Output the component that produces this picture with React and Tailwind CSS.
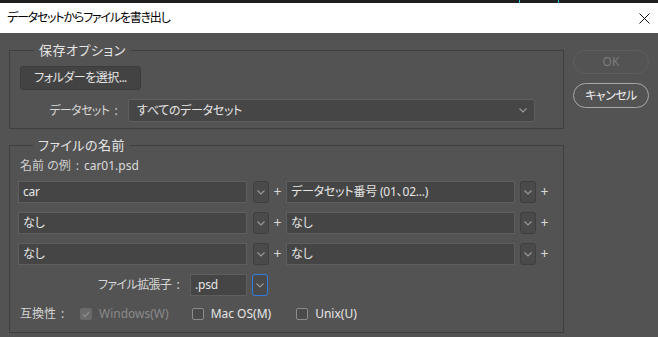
import React from 'react';

const font = "font-['Noto_Sans','Noto_Sans_CJK_JP',sans-serif] [font-feature-settings:'palt']";

// Small chevron used in dropdowns
const Chevron = ({ className = 'text-[#9a9a9a]' }) => (
  <svg width="8" height="5" viewBox="0 0 8 5" className={className}>
    <path d="M0.5 0.5 L4 4 L7.5 0.5" fill="none" stroke="currentColor" strokeWidth="1.1" />
  </svg>
);

const Colon = () => <span className="px-[5px]">:</span>;

const TextBox = ({ value, width = 'w-[229px]' }) => (
  <div className={`${width} h-[22px] bg-[#454545] border border-[#5e5e5e] flex items-center pl-[4px] text-[12px] tracking-[-0.2px] text-[#e6e6e6]`}>
    {value}
  </div>
);

const DropButton = ({ focused }) => (
  <div
    className={`w-[16px] h-[22px] rounded-[3px] bg-[#4a4a4a] border flex items-center justify-center ${
      focused ? 'border-[#2f7fe0]' : 'border-[#3f3f3f]'
    }`}
  >
    <Chevron />
  </div>
);

const Plus = () => (
  <div className="w-[17px] flex items-center justify-center text-[#d8d8d8] text-[14px] leading-none">+</div>
);

const NameRow = ({ left, right }) => (
  <div className="flex items-center">
    <TextBox value={left} />
    <div className="ml-[6px]">
      <DropButton />
    </div>
    <Plus />
    <TextBox value={right} />
    <div className="ml-[5px]">
      <DropButton />
    </div>
    <Plus />
  </div>
);

const CheckBox = ({ label, checked, disabled }) => (
  <div className="flex items-center">
    <div
      className={`w-[12px] h-[12px] rounded-[2px] border flex items-center justify-center ${
        disabled ? 'bg-[#6a6a6a] border-[#6a6a6a]' : 'bg-[#4a4a4a] border-[#8c8c8c]'
      }`}
    >
      {checked && (
        <svg width="8" height="7" viewBox="0 0 8 7">
          <path d="M1 3.5 L3 5.5 L7 1" fill="none" stroke="#8a8a8a" strokeWidth="1.4" />
        </svg>
      )}
    </div>
    <span className={`ml-[7px] text-[12px] ${disabled ? 'text-[#8a8a8a]' : 'text-[#e6e6e6]'}`}>{label}</span>
  </div>
);

export default function App() {
  return (
    <div className={`w-[658px] h-[337px] bg-[#535353] overflow-hidden flex flex-col ${font}`}>
      {/* window strip behind the dialog */}
      <div className="h-[3px] bg-[#1f1f1f] flex">
        <div className="ml-[519px] w-px bg-[#2fc9d8]" />
        <div className="ml-[38px] w-px bg-[#2fc9d8]" />
      </div>

      {/* title bar */}
      <div className="h-[30px] bg-white flex items-center justify-between pl-[7px] pr-[8px]">
        <span className="text-[12px] tracking-[-1.2px] text-black">データセットからファイルを書き出し</span>
        <svg width="11" height="11" viewBox="0 0 11 11">
          <path d="M0.5 0.5 L10.5 10.5 M10.5 0.5 L0.5 10.5" stroke="#111" strokeWidth="1" />
        </svg>
      </div>

      <div className="flex pl-[9px] pt-[9px]">
        {/* left column */}
        <div className="w-[555px] flex flex-col">
          <fieldset className="border border-[#3f3f3f] pl-[9px] pb-[6px]">
            <legend className="ml-[15px] px-[5px] text-[13px] leading-[16px] tracking-[0.5px] text-[#e4e4e4]">保存オプション</legend>
            <div className="mt-[8px] ml-px w-[121px] h-[24px] rounded-[3px] bg-[#434343] border border-[#3c3c3c] flex items-center justify-center text-[12px] tracking-[-0.5px] text-[#e6e6e6]">
              フォルダーを選択...
            </div>
            <div className="flex items-center mt-[9px]">
              <div className="w-[103px] text-right text-[12px] tracking-[-0.6px] text-[#d6d6d6]">
                データセット<Colon />
              </div>
              <div className="ml-[6px] w-[407px] h-[23px] rounded-[2px] bg-[#464646] border border-[#5e5e5e] flex items-center justify-between pl-[8px] pr-[7px] text-[12px] tracking-[-0.3px] text-[#e6e6e6]">
                すべてのデータセット
                <Chevron />
              </div>
            </div>
          </fieldset>

          <fieldset className="mt-[8px] border border-[#3f3f3f] pl-[8px] pb-[8px]">
            <legend className="ml-[15px] px-[5px] text-[13px] leading-[16px] tracking-[0.5px] text-[#e4e4e4]">ファイルの名前</legend>
            <div className="mt-[5px] ml-[2px] text-[12px] leading-[16px] text-[#cfcfcf]">
              <span>名前 の例</span>
              <Colon />
              <span className="text-[#dcdcdc]">car01.psd</span>
            </div>
            <div className="mt-[7px] flex flex-col gap-[9px]">
              <NameRow left="car" right="データセット番号 (01、02...)" />
              <NameRow left="なし" right="なし" />
              <NameRow left="なし" right="なし" />
              <div className="flex items-center">
                <div className="w-[166px] text-right text-[12px] tracking-[-0.6px] text-[#d6d6d6]">
                  ファイル拡張子<Colon />
                </div>
                <div className="ml-[6px]">
                  <TextBox value=".psd" width="w-[57px]" />
                </div>
                <div className="ml-[5px]">
                  <DropButton focused />
                </div>
              </div>
            </div>
            <div className="mt-[8px] flex items-center h-[20px] pl-[2px]">
              <span className="w-[60px] text-[12px] text-[#d6d6d6]">
                互換性<Colon />
              </span>
              <CheckBox label="Windows(W)" checked disabled />
              <div className="ml-[23px]">
                <CheckBox label="Mac OS(M)" />
              </div>
              <div className="ml-[25px]">
                <CheckBox label="Unix(U)" />
              </div>
            </div>
          </fieldset>
        </div>

        {/* right column */}
        <div className="ml-[9px] pt-[8px] flex flex-col gap-[9px]">
          <div className="w-[76px] h-[24px] rounded-full border border-[#5e5e5e] flex items-center justify-center text-[12px] text-[#7c7c7c]">
            OK
          </div>
          <div className="w-[76px] h-[25px] rounded-full border border-[#a8a8a8] flex items-center justify-center text-[12px] tracking-[-0.5px] text-[#f0f0f0]">
            キャンセル
          </div>
        </div>
      </div>
    </div>
  );
}
